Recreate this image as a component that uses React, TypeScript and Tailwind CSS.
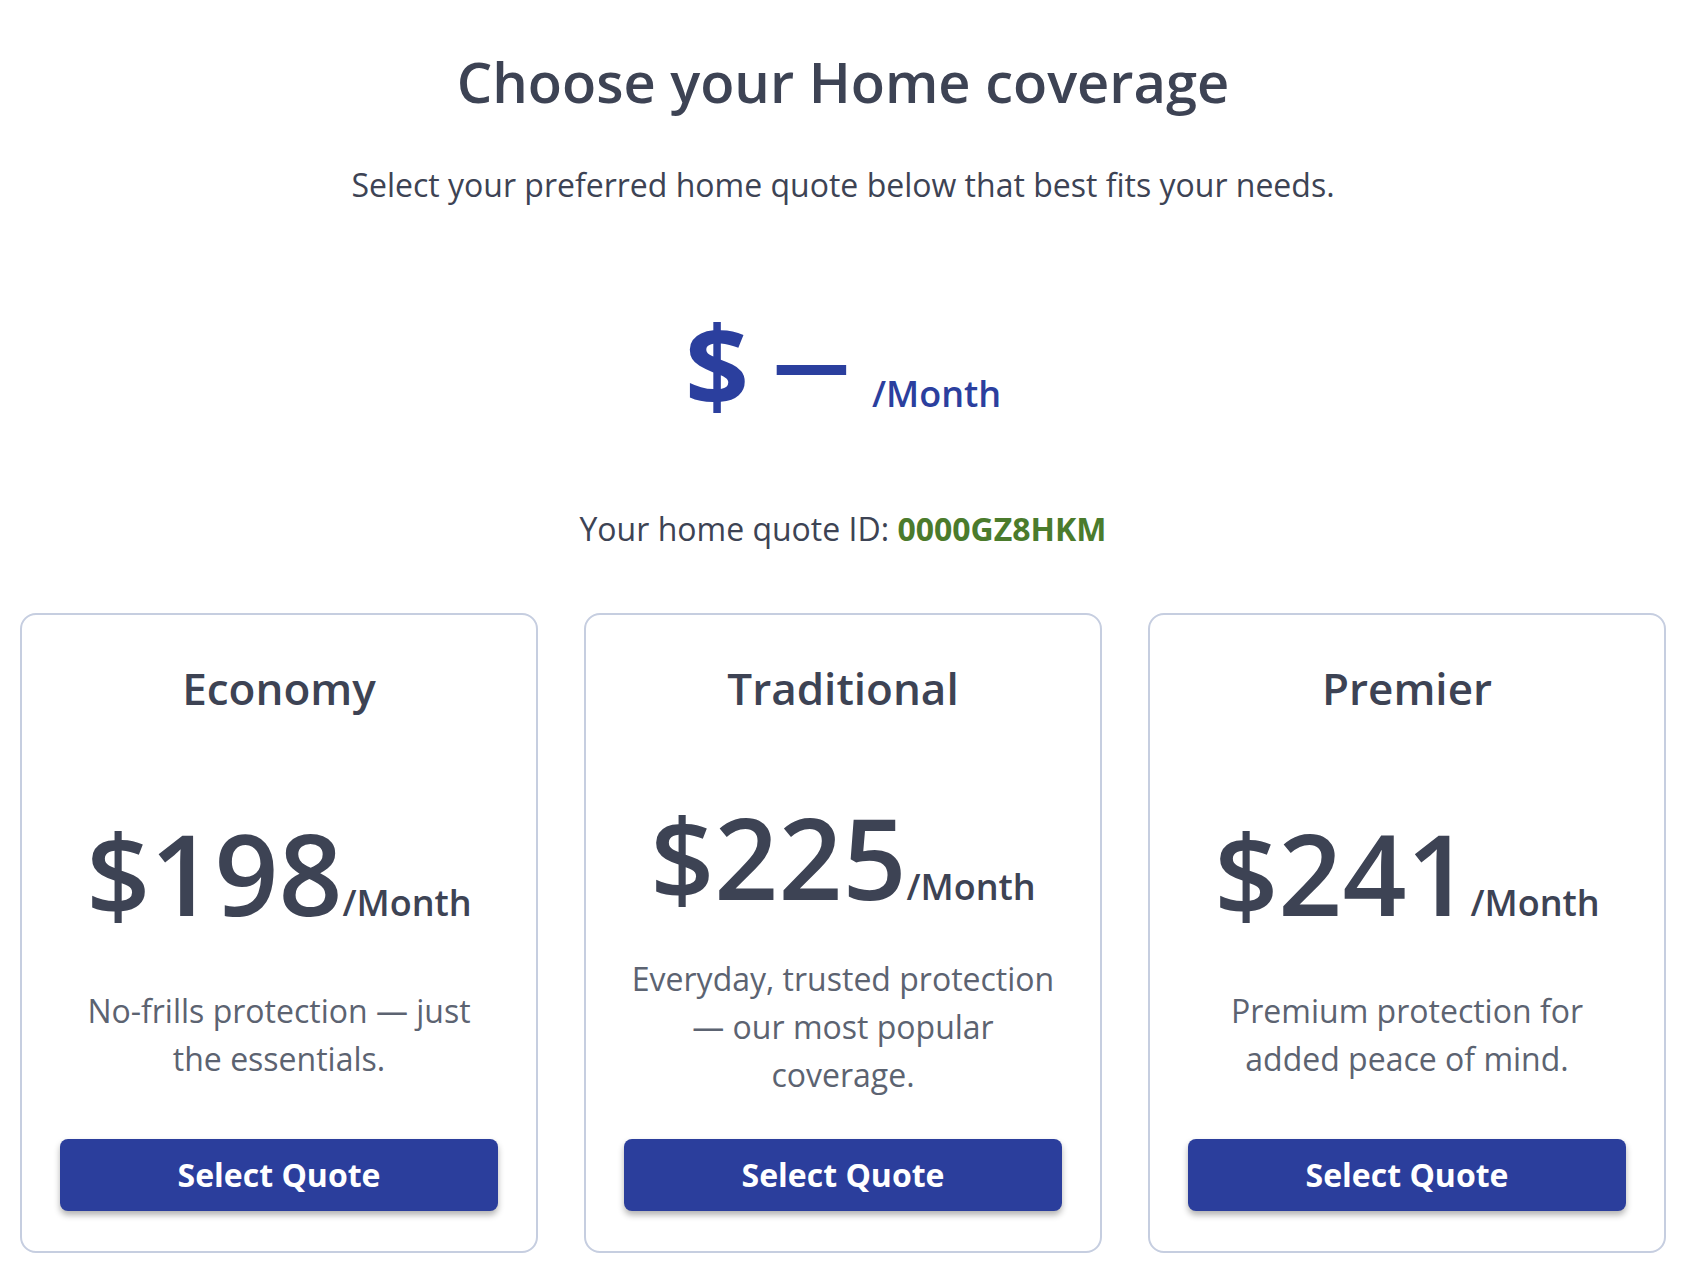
import React from "react";

const plans = [
  { name: "Economy", price: "$198", desc: "No-frills protection — just the essentials." },
  { name: "Traditional", price: "$225", desc: "Everyday, trusted protection — our most popular coverage." },
  { name: "Premier", price: "$241", desc: "Premium protection for added peace of mind." },
];

export default function App() {
  return (
    <div className="min-h-screen bg-white pr-[21px] font-['Open_Sans',sans-serif] text-[#3d4354]">
      <div className="flex flex-col items-center px-5 pb-10">
        <h1 className="pt-[48px] text-[56px] font-semibold leading-[1.2]">Choose your Home coverage</h1>
        <p className="mt-[46px] text-[32px] leading-[1.5]">
          Select your preferred home quote below that best fits your needs.
        </p>
        <div className="mt-[99px] flex items-baseline justify-center text-[#2b3f9e]">
          <span className="text-[112px] font-bold leading-none">$</span>
          <span className="-mt-[6px] ml-[25px] self-center text-[75px] font-extrabold leading-none">—</span>
          <span className="ml-[23px] text-[36px] font-semibold leading-none">/Month</span>
        </div>
        <p className="mt-[85px] text-[32px] leading-[1.5]">
          Your home quote ID: <span className="font-bold text-[#4b7b2c]">0000GZ8HKM</span>
        </p>
        <div className="mt-[60px] grid w-full grid-cols-3 gap-[46px]">
          {plans.map((p) => (
            <div
              key={p.name}
              className="flex flex-col justify-between gap-10 rounded-2xl border-2 border-[#c6cee0] px-[38px] py-10 text-center"
            >
              <h2 className="text-[44px] font-semibold leading-[1.5]">{p.name}</h2>
              <div className="flex items-baseline justify-center pb-[2px] pt-[40px]">
                <span className="text-[112px] font-semibold leading-none">{p.price}</span>
                <span className="text-[36px] font-semibold leading-none">/Month</span>
              </div>
              <p className="px-[2px] text-[32px] leading-[1.5] text-[#5c6371]">{p.desc}</p>
              <button className="h-[72px] w-full rounded-lg bg-[#2b3e9c] text-[32px] font-bold text-white shadow-[0_4px_6px_rgba(0,0,0,0.3)]">
                Select Quote
              </button>
            </div>
          ))}
        </div>
      </div>
    </div>
  );
}
